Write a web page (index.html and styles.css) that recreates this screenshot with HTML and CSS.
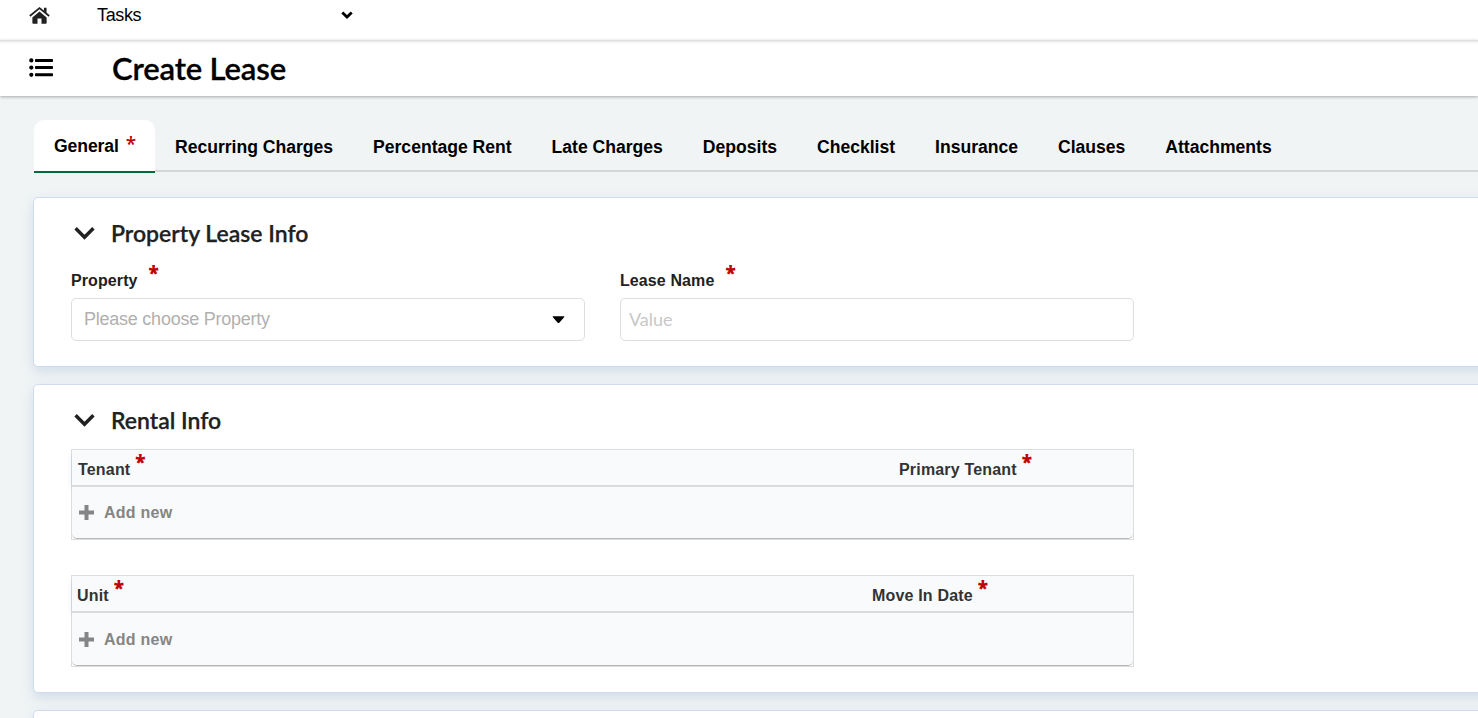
FILE: index.html
```html
<!DOCTYPE html>
<html lang="en">
<head>
  <meta charset="UTF-8" />
  <meta name="viewport" content="width=device-width, initial-scale=1.0" />
  <title>Create Lease</title>
  <link rel="stylesheet" href="styles.css">
</head>
<body>
  <nav class="topbar">
    <svg class="home-icon" viewBox="0 0 20 16">
      <path d="M10 4.2 3.2 9.8v5.1q0 .9.9.9h4v-5h3.8v5h4q.9 0 .9-.9V9.8z"/>
      <path d="M.8 8.5 10 1l9.2 7.5" fill="none" stroke="currentColor" stroke-width="1.7"/>
      <path d="M14.2.7h2.5v5l-2.5-2z"/>
    </svg>
    <div class="task-menu">
      <span>Tasks</span>
      <svg class="menu-arrow" viewBox="0 0 12 8"><path d="m1.3 1.4 4.7 4.6 4.7-4.6"/></svg>
    </div>
  </nav>

  <header class="titlebar">
    <svg class="list-icon" viewBox="0 0 24 20">
      <circle cx="2.3" cy="2.4" r="2.1"/><circle cx="2.3" cy="9.6" r="2.1"/><circle cx="2.3" cy="16.8" r="2.1"/>
      <rect x="6" y="1" width="18" height="3" rx=".8"/><rect x="6" y="8.1" width="18" height="3" rx=".8"/><rect x="6" y="15.2" width="18" height="3" rx=".8"/>
    </svg>
    <h1>Create Lease</h1>
  </header>

  <main>
    <div class="tabs">
      <a class="tab active">General<span class="tab-star">*</span></a>
      <a class="tab">Recurring Charges</a>
      <a class="tab">Percentage Rent</a>
      <a class="tab">Late Charges</a>
      <a class="tab">Deposits</a>
      <a class="tab">Checklist</a>
      <a class="tab">Insurance</a>
      <a class="tab">Clauses</a>
      <a class="tab">Attachments</a>
    </div>

    <section class="card lease-info">
      <h2><svg class="chevron" viewBox="0 0 20 13"><path d="m1.5 2 8.5 8.5L18.5 2"/></svg>Property Lease Info</h2>
      <div class="fields">
        <div class="field">
          <label>Property<span class="star">*</span></label>
          <div class="input select"><span>Please choose Property</span><svg class="caret" viewBox="0 0 13 8"><path d="M1.3.3h10.4q1.2 0 .4 1L7.3 6.7q-.8.8-1.6 0L.9 1.3q-.8-1 .4-1z"/></svg></div>
        </div>
        <div class="field">
          <label>Lease Name<span class="star">*</span></label>
          <div class="input text">Value</div>
        </div>
      </div>
    </section>

    <section class="card rental-info">
      <h2><svg class="chevron" viewBox="0 0 20 13"><path d="m1.5 2 8.5 8.5L18.5 2"/></svg>Rental Info</h2>
      <div class="grid tenants">
        <div class="grid-head">
          <div class="col-main">Tenant<span class="star">*</span></div>
          <div>Primary Tenant<span class="star">*</span></div>
        </div>
        <div class="grid-add"><svg class="plus" viewBox="0 0 15 15"><path d="M5.5 0h4v5.5H15v4H9.5V15h-4V9.5H0v-4h5.5z"/></svg>Add new</div>
      </div>
      <div class="grid units">
        <div class="grid-head">
          <div class="col-main">Unit<span class="star">*</span></div>
          <div>Move In Date<span class="star">*</span></div>
        </div>
        <div class="grid-add"><svg class="plus" viewBox="0 0 15 15"><path d="M5.5 0h4v5.5H15v4H9.5V15h-4V9.5H0v-4h5.5z"/></svg>Add new</div>
      </div>
    </section>

    <section class="card next-card"></section>
  </main>
</body>
</html>
```

FILE: styles.css
```css
* {
  box-sizing: border-box;
}

body {
  margin: 0;
  height: 718px;
  overflow: hidden;
  background: #f0f4f5;
  color: #212121;
  font-family: "Liberation Sans", Arial, sans-serif;
}

.topbar {
  display: flex;
  height: 40px;
  padding-left: 29px;
  background: #fff;
}

.home-icon {
  width: 21px;
  height: 17px;
  margin-top: 7px;
  fill: currentColor;
}

.task-menu {
  display: flex;
  justify-content: space-between;
  width: 256px;
  margin-left: 47px;
  padding-top: 5px;
  color: #000;
  font-size: 18px;
  line-height: 20px;
  letter-spacing: -0.35px;
}

.menu-arrow {
  width: 12px;
  height: 8px;
  margin-top: 6px;
  fill: none;
  stroke: #000;
  stroke-width: 2.8;
}

.titlebar {
  position: relative;
  display: flex;
  height: 56px;
  padding-left: 29px;
  background: linear-gradient(#dadada, #f2f2f2 2px, #fff 4px);
  box-shadow: 0 1px 3px rgba(0, 0, 0, 0.3);
}

.list-icon {
  width: 24px;
  height: 20px;
  margin-top: 18px;
}

h1 {
  margin: 8px 0 0 59px;
  color: #000;
  font: 600 31px/40px Lato, sans-serif;
  letter-spacing: -0.15px;
  -webkit-text-stroke: 0.3px #000;
}

main {
  height: 622px;
  padding: 24px 0 0 33px;
  overflow: hidden;
}

.tabs {
  display: flex;
  height: 53px;
  margin-left: 1px;
  background: linear-gradient(#d5d4d6, #d5d4d6) 0 50px / 100% 2px no-repeat;
}

.tab {
  padding: 16px 20px 0;
  color: #000;
  font-size: 17.6px;
  font-weight: bold;
  line-height: 22px;
  letter-spacing: -0.02px;
  white-space: nowrap;
}

.tab.active {
  width: 121px;
  padding-top: 15px;
  background: #fff;
  border-bottom: 2px solid #006b3c;
  border-radius: 10px 10px 0 0;
  letter-spacing: -0.1px;
}

.tab-star {
  margin-left: 7px;
  color: #c00000;
  font: 600 19px/14px "Open Sans", sans-serif;
  vertical-align: 1px;
}

.card {
  width: 1500px;
  background: #fff;
  border: 1px solid #d0dced;
  border-radius: 5px;
  box-shadow: 0 5px 12px rgba(120, 155, 205, 0.25);
}

.lease-info {
  height: 170px;
  margin-top: 24px;
  padding: 19px 0 0 37px;
}

.rental-info {
  height: 309px;
  margin-top: 17px;
  padding: 19px 0 0 37px;
}

.next-card {
  height: 8px;
  margin-top: 17px;
  border-bottom: 0;
  border-radius: 5px 5px 0 0;
}

h2 {
  display: flex;
  margin: 0;
  font: 600 23px/32px Lato, sans-serif;
  -webkit-text-stroke: 0.25px #212121;
}

.chevron {
  width: 21px;
  height: 14px;
  margin: 9px 16px 0 3px;
  fill: none;
  stroke: #212121;
  stroke-width: 3.3;
}

.fields {
  display: flex;
  gap: 35px;
  margin-top: 22px;
}

.field {
  width: 514px;
}

label {
  display: flex;
  height: 27px;
  font-size: 16px;
  font-weight: bold;
  line-height: 20px;
  letter-spacing: 0.1px;
}

.star {
  margin: -8px 0 0 11px;
  color: #c00000;
  font: 800 19px/20px "Open Sans", sans-serif;
}

.input {
  display: flex;
  height: 43px;
  border: 1px solid #dedede;
  border-radius: 5px;
  line-height: 41px;
}

.select {
  justify-content: space-between;
  padding: 0 19px 0 12px;
  color: #b0b0b0;
  font-size: 18px;
  letter-spacing: -0.24px;
}

.caret {
  width: 13px;
  height: 8px;
  margin-top: 17px;
  fill: #000;
}

.text {
  padding-left: 8px;
  color: #c7c7c7;
  font-family: Lato, sans-serif;
  font-size: 18px;
}

.grid {
  width: 1063px;
  background: #fff;
  border: 1px solid #dcdddf;
}

.tenants {
  height: 91px;
  margin-top: 13px;
}

.units {
  height: 92px;
  margin-top: 35px;
}

.grid-head {
  display: flex;
  height: 37px;
  padding: 10px 0 0 6px;
  background: #f9fafc;
  border-bottom: 2px solid #dadbdd;
  box-shadow: -2px 3px 4px -2px rgba(120, 140, 190, 0.25);
  color: #333;
  font-size: 16px;
  font-weight: bold;
  line-height: 20px;
  letter-spacing: 0.18px;
}

.grid-head > div {
  display: flex;
}

.grid-head .col-main {
  width: 821px;
}

.grid-head .star {
  margin: -8px 0 0 5px;
}

.units .grid-head {
  padding-left: 5px;
}

.units .col-main {
  width: 795px;
}

.grid-add {
  display: flex;
  align-items: center;
  height: 52px;
  padding-left: 7px;
  background: #f9fafc;
  border-bottom: 1px solid #b6b7b9;
  border-radius: 0 0 5px 5px;
  color: #858585;
  font-size: 16px;
  font-weight: bold;
  letter-spacing: 0.25px;
}

.units .grid-add {
  height: 53px;
  padding-top: 1px;
}

.plus {
  width: 15px;
  height: 15px;
  margin-right: 10px;
  fill: currentColor;
}
```
